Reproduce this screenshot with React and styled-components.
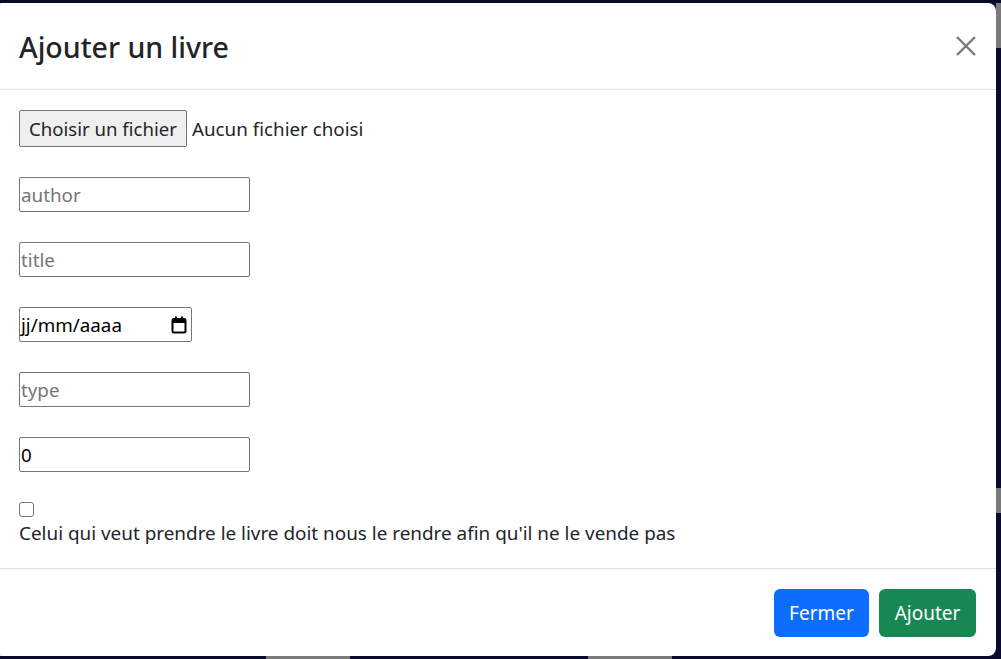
import React from "react";
import styled, { createGlobalStyle } from "styled-components";

const Global = createGlobalStyle`
  html, body { margin: 0; padding: 0; }
  body {
    background: #0a0a2c;
    font-family: "Noto Sans", "Open Sans", sans-serif;
    color: #212529;
    overflow: hidden;
  }
  * { box-sizing: border-box; }
`;

const Page = styled.div`
  position: relative;
  width: 1001px;
  height: 659px;
  overflow: hidden;
  background: #0a0a2c;
`;

const BackBlock = styled.div`
  position: absolute;
  background: #7b7b7b;
`;

const Modal = styled.div`
  position: absolute;
  left: -6px;
  top: 3px;
  width: 1002px;
  height: 653px;
  background: #fff;
  border-radius: 8px;
  display: flex;
  flex-direction: column;
  overflow: hidden;
`;

const Header = styled.div`
  height: 87px;
  flex: none;
  display: flex;
  align-items: center;
  justify-content: space-between;
  padding: 0 20px 0 25px;
  border-bottom: 1px solid #dee2e6;
`;

const Title = styled.h4`
  margin: 0;
  font-size: 28.5px;
  font-weight: 500;
  line-height: 1.2;
  color: #212529;
  padding-top: 2px;
`;

const CloseButton = styled.button`
  width: 20px;
  height: 20px;
  padding: 0;
  border: 0;
  background: transparent;
  display: flex;
  margin-top: 0px;
`;

const Body = styled.div`
  flex: none;
  height: 478px;
  padding: 20px 25px 20px 25px;
  display: flex;
  flex-direction: column;
  align-items: flex-start;
`;

const Field = styled.div`
  display: flex;
  align-items: center;
  margin-bottom: 30px;
  height: ${(p) => p.h || 35}px;
`;

const FileButton = styled.button`
  height: 37px;
  width: 168px;
  padding: 0;
  border: 1px solid #767676;
  border-radius: 2px;
  background: #efefef;
  font-family: inherit;
  font-size: 18.6px;
  color: #212529;
  white-space: nowrap;
`;

const FileText = styled.span`
  margin-left: 5px;
  font-size: 18.8px;
  color: #212529;
  white-space: nowrap;
`;

const TextInput = styled.input`
  width: ${(p) => p.w || 231}px;
  height: 35px;
  border: 1px solid #767676;
  border-radius: 2px;
  padding: 0 1px;
  font-family: inherit;
  font-size: 18.8px;
  color: #000;
  background: #fff;
  outline: none;
  &::placeholder { color: #757575; }
`;

const DateBox = styled.div`
  width: 173px;
  height: 35px;
  border: 1px solid #767676;
  border-radius: 2px;
  display: flex;
  align-items: center;
  justify-content: space-between;
  padding: 0 4px 0 1px;
  font-size: 18.8px;
  color: #000;
`;

const Check = styled.input`
  appearance: none;
  margin: 0;
  width: 15px;
  height: 15px;
  border: 1px solid #767676;
  border-radius: 3px;
  background: #fff;
  flex: none;
`;

const CheckWrap = styled.div`
  height: 16px;
  display: flex;
  align-items: flex-start;
`;

const Label = styled.label`
  display: block;
  font-size: 18.9px;
  line-height: 30px;
  color: #212529;
  white-space: nowrap;
`;

const Footer = styled.div`
  flex: none;
  border-top: 1px solid #dee2e6;
  padding: 20px 20px 18px 25px;
  display: flex;
  justify-content: flex-end;
  gap: 10px;
`;

const Btn = styled.button`
  height: 48px;
  width: ${(p) => p.w}px;
  border: 0;
  border-radius: 6px;
  background: ${(p) => p.bg};
  color: #fff;
  font-family: inherit;
  font-size: 19px;
  padding: 0;
`;

export default function App() {
  return (
    <>
      <Global />
      <Page>
        <BackBlock style={{ right: 0, top: 3, width: 5, height: 45 }} />
        <BackBlock style={{ right: 0, top: 488, width: 5, height: 25 }} />
        <BackBlock style={{ left: 266, bottom: 0, width: 84, height: 3 }} />
        <BackBlock style={{ left: 588, bottom: 0, width: 84, height: 3 }} />
        <Modal>
          <Header>
            <Title>Ajouter un livre</Title>
            <CloseButton aria-label="Close">
              <svg width="20" height="20" viewBox="0 0 20 20">
                <path d="M1 1 L19 19 M19 1 L1 19" stroke="#7a7a7a" strokeWidth="2.4" />
              </svg>
            </CloseButton>
          </Header>
          <Body>
            <Field h={37}>
              <FileButton>Choisir un fichier</FileButton>
              <FileText>Aucun fichier choisi</FileText>
            </Field>
            <Field>
              <TextInput placeholder="author" />
            </Field>
            <Field>
              <TextInput placeholder="title" />
            </Field>
            <Field>
              <DateBox>
                <span>jj/mm/aaaa</span>
                <svg width="16" height="18" viewBox="0 0 16 18">
                  <rect x="1.5" y="3" width="13" height="13.5" rx="1.5" fill="none" stroke="#000" strokeWidth="2" />
                  <rect x="1.5" y="3" width="13" height="4" fill="#000" />
                  <rect x="4" y="0.5" width="2" height="3" fill="#000" />
                  <rect x="10" y="0.5" width="2" height="3" fill="#000" />
                </svg>
              </DateBox>
            </Field>
            <Field>
              <TextInput placeholder="type" />
            </Field>
            <Field>
              <TextInput defaultValue="0" />
            </Field>
            <CheckWrap>
              <Check type="checkbox" />
            </CheckWrap>
            <Label>Celui qui veut prendre le livre doit nous le rendre afin qu'il ne le vende pas</Label>
          </Body>
          <Footer>
            <Btn w={95} bg="#0d6efd">Fermer</Btn>
            <Btn w={97} bg="#198754">Ajouter</Btn>
          </Footer>
        </Modal>
      </Page>
    </>
  );
}
